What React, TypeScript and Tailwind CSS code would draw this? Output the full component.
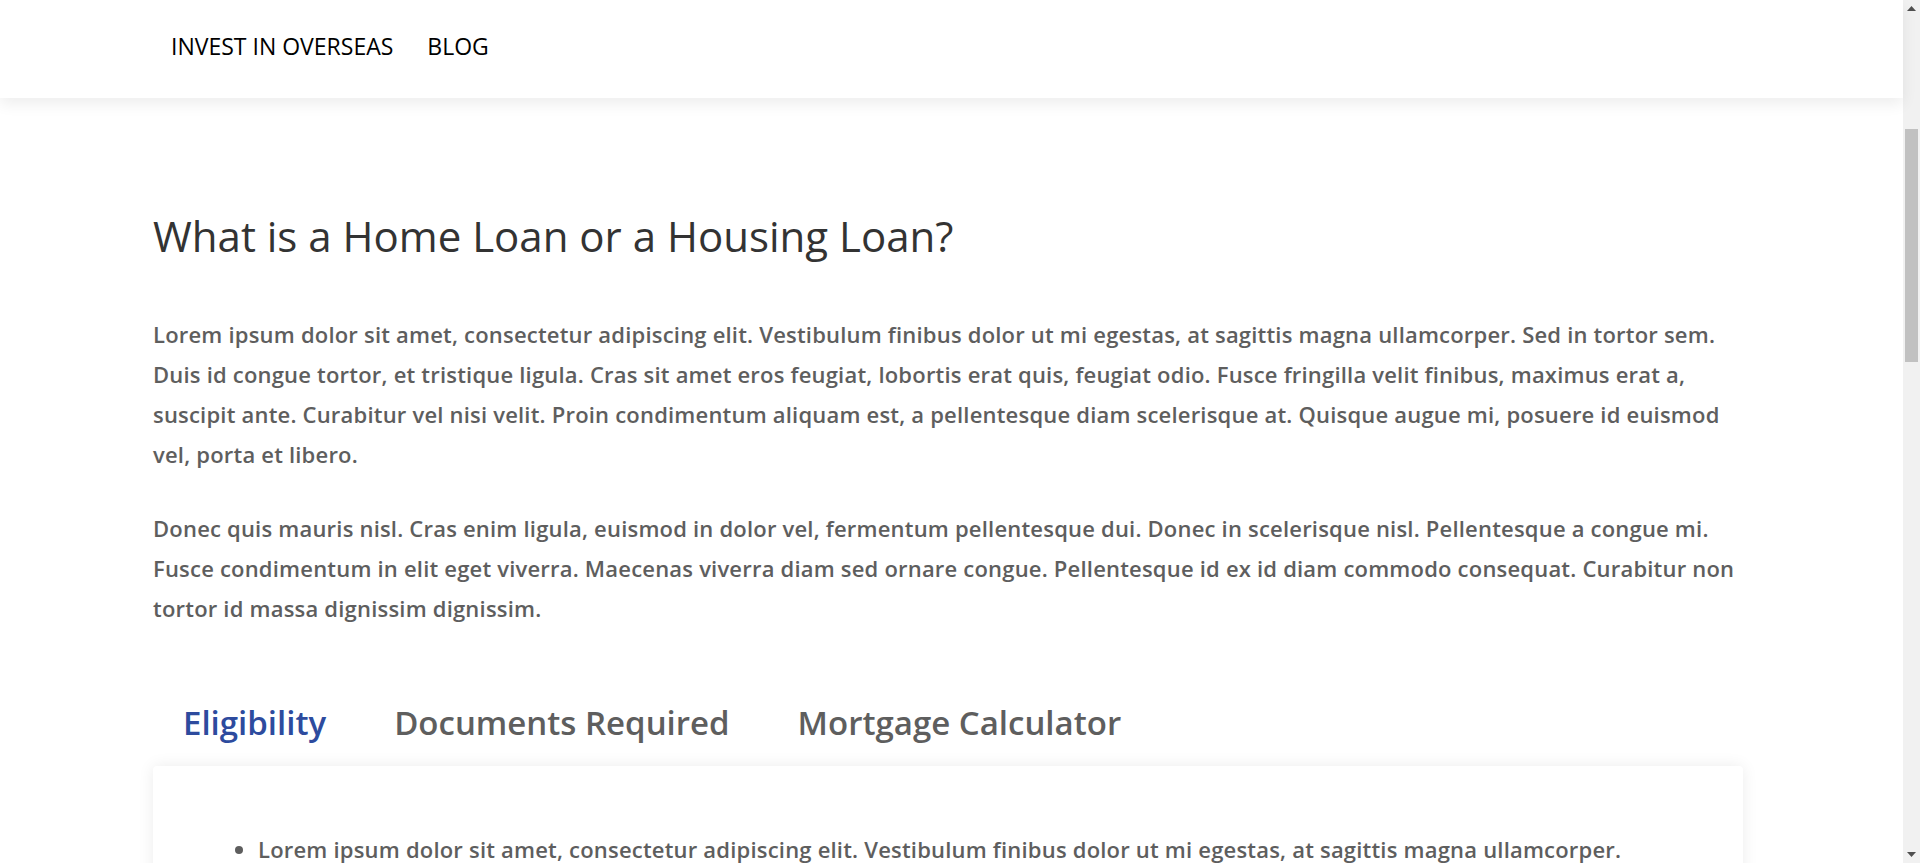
import React from 'react';

const navLinks = ['INVEST IN OVERSEAS', 'BLOG'];

const tabs = [
  { id: 'eligibility', label: 'Eligibility' },
  { id: 'documents', label: 'Documents Required' },
  { id: 'calculator', label: 'Mortgage Calculator' },
];

const paragraphs = [
  'Lorem ipsum dolor sit amet, consectetur adipiscing elit. Vestibulum finibus dolor ut mi egestas, at sagittis magna ullamcorper. Sed in tortor sem. Duis id congue tortor, et tristique ligula. Cras sit amet eros feugiat, lobortis erat quis, feugiat odio. Fusce fringilla velit finibus, maximus erat a, suscipit ante. Curabitur vel nisi velit. Proin condimentum aliquam est, a pellentesque diam scelerisque at. Quisque augue mi, posuere id euismod vel, porta et libero.',
  'Donec quis mauris nisl. Cras enim ligula, euismod in dolor vel, fermentum pellentesque dui. Donec in scelerisque nisl. Pellentesque a congue mi. Fusce condimentum in elit eget viverra. Maecenas viverra diam sed ornare congue. Pellentesque id ex id diam commodo consequat. Curabitur non tortor id massa dignissim dignissim.',
];

const eligibility = [
  'Lorem ipsum dolor sit amet, consectetur adipiscing elit. Vestibulum finibus dolor ut mi egestas, at sagittis magna ullamcorper.',
  'Duis id congue tortor, et tristique ligula. Cras sit amet eros feugiat, lobortis erat quis, feugiat odio.',
];

function Scrollbar() {
  return (
    <div className="w-[17px] h-full bg-[#f1f1f1] flex flex-col shrink-0">
      <div className="h-[17px] flex items-center justify-center">
        <svg width="9" height="5" viewBox="0 0 9 5">
          <path d="M0 5 L4.5 0 L9 5 Z" fill="#505050" />
        </svg>
      </div>
      <div className="flex-1 pt-[112px] px-[2px]">
        <div className="h-[233px] bg-[#c1c1c1]" />
      </div>
      <div className="h-[17px] flex items-center justify-center">
        <svg width="9" height="5" viewBox="0 0 9 5">
          <path d="M0 0 L9 0 L4.5 5 Z" fill="#505050" />
        </svg>
      </div>
    </div>
  );
}

export default function App() {
  const [activeTab, setActiveTab] = React.useState('eligibility');

  return (
    <div className="flex w-[1920px] h-[863px] overflow-hidden bg-white font-['Open_Sans',sans-serif]">
      <div className="flex-1 min-w-0 flex flex-col">
        <div className="h-[3px] bg-[#f3f3f3]" />

        {/* Header */}
        <header className="relative z-10 h-[98px] bg-white shadow-[0_6px_14px_rgba(0,0,0,0.07)] shrink-0">
          <nav className="w-[1590px] ml-[153px] pl-[18px] pt-[31px] flex gap-[34px]">
            {navLinks.map((link) => (
              <a key={link} href="#" className="text-[23px] leading-[30px] text-black">
                {link}
              </a>
            ))}
          </nav>
        </header>

        <main className="w-[1590px] ml-[153px] pt-[113px]">
          <h1 className="text-[42px] leading-[50px] font-normal text-[#333333]">
            What is a Home Loan or a Housing Loan?
          </h1>

          <div className="mt-[53px] flex flex-col gap-[34px]">
            {paragraphs.map((p, i) => (
              <p key={i} className="text-[22px] leading-[40px] font-semibold tracking-[0.2px] text-[#5e5e5e]">
                {p}
              </p>
            ))}
          </div>

          {/* Tabs */}
          <div className="mt-[72px] pl-[30px] flex gap-[68px]">
            {tabs.map((t) => (
              <button
                key={t.id}
                onClick={() => setActiveTab(t.id)}
                className={`text-[33px] leading-[46px] font-semibold ${
                  activeTab === t.id ? 'text-[#2d4b9e]' : 'text-[#5e5e5e]'
                }`}
              >
                {t.label}
              </button>
            ))}
          </div>

          <div className="mt-[20px] bg-white rounded-[4px] shadow-[0_0_16px_rgba(0,0,0,0.08)] pt-[63px] pl-[65px] pr-[40px] pb-[40px]">
            <ul className="list-disc pl-[40px]">
              {eligibility.map((item, i) => (
                <li key={i} className="text-[22px] leading-[40px] font-semibold tracking-[0.2px] text-[#5e5e5e]">
                  {item}
                </li>
              ))}
            </ul>
          </div>
        </main>
      </div>

      <Scrollbar />
    </div>
  );
}
